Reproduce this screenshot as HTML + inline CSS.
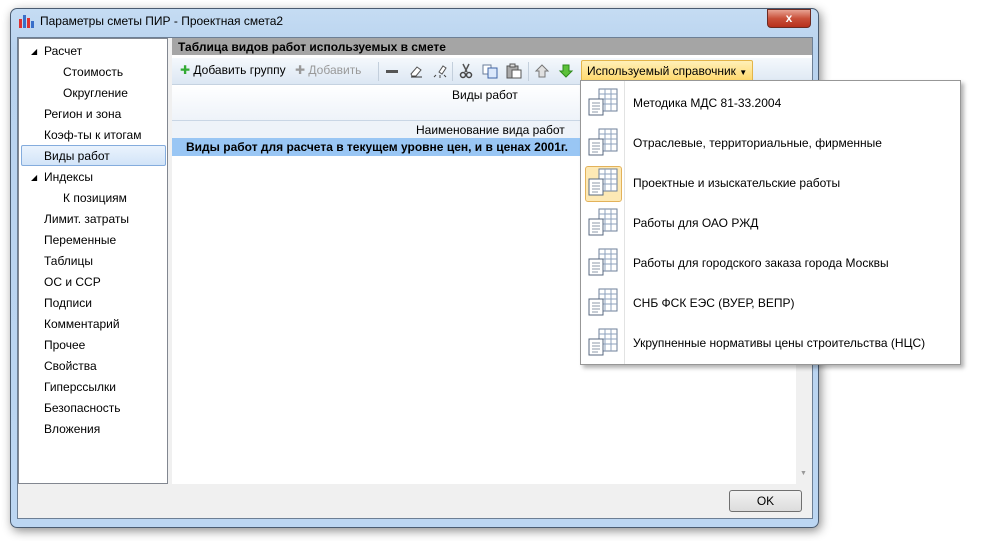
<!DOCTYPE html>
<html><head><meta charset="utf-8"><style>
*{margin:0;padding:0;box-sizing:border-box}
body{width:986px;height:541px;background:#fff;position:relative;overflow:hidden;font-family:"Liberation Sans","DejaVu Sans",sans-serif;font-size:12px;color:#000}
.abs{position:absolute}
.win{left:10px;top:8px;width:809px;height:520px;border:1px solid #4a5b70;border-radius:7px;background:linear-gradient(#c5dcf3,#b9d3ef 40px,#bcd6f2);box-shadow:2px 3px 10px rgba(0,0,0,.45)}
.client{left:17px;top:37px;width:796px;height:482px;background:#f0f0f0;border:1px solid #6d7f95}
.tree{left:18px;top:38px;width:150px;height:446px;background:#fff;border:1px solid #828790}
.tree div{position:absolute;left:25px;font-size:12px;white-space:nowrap}
.right{left:172px;top:38px;width:640px;height:446px;background:#fff}
.menu{left:580px;top:80px;width:381px;height:285px;background:#fff;border:1px solid #979797;box-shadow:3px 3px 4px rgba(0,0,0,.3)}
.mi{position:absolute;left:52px;font-size:12px;white-space:nowrap}
.ico{position:absolute;left:6px;width:32px;height:30px}
.tb{position:absolute;top:63px;width:16px;height:16px}
.sep{position:absolute;top:62px;width:1px;height:19px;background:#c3cfdc}
</style></head><body>
<div class="abs win"></div>
<svg class="abs" style="left:19px;top:14px" width="16" height="14"><rect x="0" y="5" width="3" height="9" fill="#d33"/><rect x="4" y="1" width="3" height="13" fill="#3a6fc9"/><rect x="8" y="4" width="3" height="10" fill="#d33"/><rect x="12" y="7" width="3" height="7" fill="#3a6fc9"/></svg>
<div class="abs" style="left:40px;top:14px;font-size:12px">Параметры сметы ПИР - Проектная смета2</div>
<div class="abs" style="left:767px;top:9px;width:44px;height:19px;border:1px solid #6b2a22;border-radius:0 0 4px 4px;background:linear-gradient(#e8a393,#c9503a 50%,#b6301c);color:#fff;font-weight:bold;text-align:center;font-size:12px;line-height:17px">x</div>
<div class="abs client"></div>
<div class="abs tree">
<div style="left:12px;top:8px;font-size:8px">◢</div>
<div style="top:5px">Расчет</div>
<div style="left:44px;top:26px">Стоимость</div>
<div style="left:44px;top:47px">Округление</div>
<div style="top:68px">Регион и зона</div>
<div style="top:89px">Коэф-ты к итогам</div>
<div style="left:2px;top:106px;width:145px;height:21px;border:1px solid #84acdd;border-radius:2px;background:linear-gradient(#eaf3fd,#d2e4f8)"></div>
<div style="top:110px">Виды работ</div>
<div style="left:12px;top:134px;font-size:8px">◢</div>
<div style="top:131px">Индексы</div>
<div style="left:44px;top:152px">К позициям</div>
<div style="top:173px">Лимит. затраты</div>
<div style="top:194px">Переменные</div>
<div style="top:215px">Таблицы</div>
<div style="top:236px">ОС и ССР</div>
<div style="top:257px">Подписи</div>
<div style="top:278px">Комментарий</div>
<div style="top:299px">Прочее</div>
<div style="top:320px">Свойства</div>
<div style="top:341px">Гиперссылки</div>
<div style="top:362px">Безопасность</div>
<div style="top:383px">Вложения</div>
</div>
<div class="abs right"></div>
<div class="abs" style="left:172px;top:38px;width:640px;height:17px;background:#a5a5a5;font-weight:bold;padding:2px 0 0 6px;font-size:12px">Таблица видов работ используемых в смете</div>
<div class="abs" style="left:172px;top:58px;width:640px;height:27px;background:linear-gradient(#f4f8fc,#dce7f3);border-bottom:1px solid #c5d2e0"></div>
<div class="abs" style="left:180px;top:63px;font-size:12px"><span style="color:#3a3">✚</span> Добавить группу <span style="color:#999;margin-left:6px">✚ Добавить</span></div>
<div class="sep" style="left:378px"></div>
<svg class="tb" style="left:384px"><rect x="2" y="7" width="12" height="3" fill="#555"/></svg>
<svg class="tb" style="left:408px"><path d="M3 11l6-7 4 3-5 6H4z" fill="#fff" stroke="#555"/><path d="M3 14h11" stroke="#333"/></svg>
<svg class="tb" style="left:432px"><path d="M7 9l4-6 3 2-4 6z" fill="#fff" stroke="#555"/><path d="M2 14l2-2M8 15v-3M14 14l-2-2" stroke="#444"/></svg>
<div class="sep" style="left:452px"></div>
<svg class="tb" style="left:458px"><path d="M5 1l4 8M11 1L7 9" stroke="#555" stroke-width="1.5"/><circle cx="5" cy="12" r="2.5" fill="none" stroke="#444" stroke-width="1.5"/><circle cx="11" cy="12" r="2.5" fill="none" stroke="#444" stroke-width="1.5"/></svg>
<svg class="tb" style="left:482px"><rect x="1" y="2" width="8" height="9" fill="#fff" stroke="#6a7c98"/><rect x="6" y="5" width="9" height="10" fill="#dbe8fb" stroke="#3e63a6"/></svg>
<svg class="tb" style="left:506px"><rect x="1" y="3" width="11" height="12" fill="#aaa" stroke="#555"/><rect x="4" y="1" width="5" height="3" fill="#ddd" stroke="#555"/><rect x="6" y="7" width="9" height="8" fill="#fff" stroke="#555"/></svg>
<div class="sep" style="left:528px"></div>
<svg class="tb" style="left:534px"><path d="M8 2l6 6h-3v6H5V8H2z" fill="#e0e0e0" stroke="#777"/></svg>
<svg class="tb" style="left:558px"><path d="M8 14l6-6h-3V2H5v6H2z" fill="#5cc13a" stroke="#2d8a1a"/></svg>
<div class="abs" style="left:581px;top:60px;width:172px;height:22px;border:1px solid #e3b54a;border-radius:2px;background:linear-gradient(#fff0b8,#ffd86a);padding:3px 0 0 5px;font-size:12px">Используемый справочник <span style="font-size:8px">▼</span></div>
<div class="abs" style="left:172px;top:85px;width:624px;height:35px;background:linear-gradient(#fff,#eef3f9)"></div>
<div class="abs" style="left:452px;top:88px">Виды работ</div>
<div class="abs" style="left:172px;top:120px;width:624px;height:18px;background:#eef3f9;border-top:1px solid #c9d6e5"></div>
<div class="abs" style="left:416px;top:123px">Наименование вида работ</div>
<div class="abs" style="left:172px;top:138px;width:624px;height:18px;background:#99c6f4"></div>
<div class="abs" style="left:186px;top:140px;font-weight:bold">Виды работ для расчета в текущем уровне цен, и в ценах 2001г.</div>
<div class="abs" style="left:796px;top:85px;width:16px;height:399px;background:#f0f0f0"></div>
<div class="abs" style="left:800px;top:470px;font-size:7px;color:#999">▼</div>
<div class="abs" style="left:729px;top:490px;width:73px;height:22px;border:1px solid #707070;border-radius:3px;background:linear-gradient(#f2f2f2,#dcdcdc);text-align:center;line-height:20px">OK</div>
<div class="abs menu">
<div class="abs" style="left:43px;top:0;width:1px;height:283px;background:#e2e3e3"></div>
<div class="abs" style="left:4px;top:85px;width:37px;height:36px;border:1px solid #e3b25a;border-radius:3px;background:#fde9b5"></div>
<svg width="0" height="0" style="position:absolute"><defs><g id="ic"><rect x="12" y="1" width="18" height="22" fill="#fff" stroke="#6d7f98"/><path d="M12 6h18M12 11h18M12 16h18M18 1v22M24 1v22" stroke="#8ea2bd"/><rect x="2" y="11" width="14" height="16" fill="#fff" stroke="#596a80"/><path d="M5 15h8M5 18h8M5 21h8M5 24h6" stroke="#8d98a8"/></g></defs></svg>
<svg class="ico" style="top:7px"><use href="#ic"/></svg>
<svg class="ico" style="top:47px"><use href="#ic"/></svg>
<svg class="ico" style="top:87px"><use href="#ic"/></svg>
<svg class="ico" style="top:127px"><use href="#ic"/></svg>
<svg class="ico" style="top:167px"><use href="#ic"/></svg>
<svg class="ico" style="top:207px"><use href="#ic"/></svg>
<svg class="ico" style="top:247px"><use href="#ic"/></svg>
<div class="mi" style="top:15px">Методика МДС 81-33.2004</div>
<div class="mi" style="top:55px">Отраслевые, территориальные, фирменные</div>
<div class="mi" style="top:95px">Проектные и изыскательские работы</div>
<div class="mi" style="top:135px">Работы для ОАО РЖД</div>
<div class="mi" style="top:175px">Работы для городского заказа города Москвы</div>
<div class="mi" style="top:215px">СНБ ФСК ЕЭС (ВУЕР, ВЕПР)</div>
<div class="mi" style="top:255px">Укрупненные нормативы цены строительства (НЦС)</div>
</div>
</body></html>
